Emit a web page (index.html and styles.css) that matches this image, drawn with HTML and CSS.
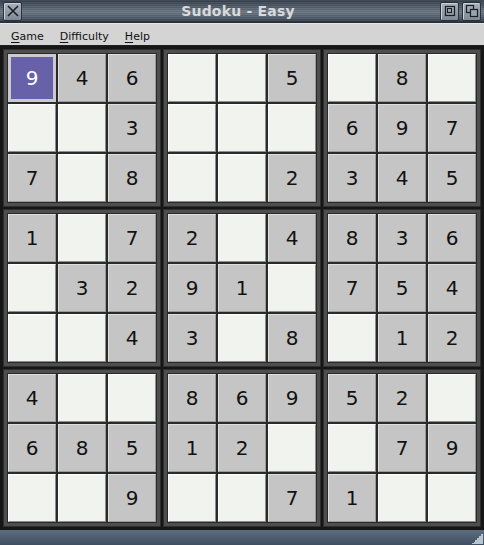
FILE: index.html
```html
<!DOCTYPE html>
<html>
<head>
<meta charset="utf-8">
<link rel="stylesheet" href="styles.css">
</head>
<body>
<div class="window">
  <div class="titlebar">
    <div class="tbtn close">
      <svg width="14" height="14" viewBox="0 0 14 14"><path d="M2 2 L12 12 M12 2 L2 12" stroke="#1a1f26" stroke-width="1.6" fill="none"/></svg>
    </div>
    <div class="title">Sudoku - Easy</div>
    <div class="tright">
      <div class="tbtn">
        <svg width="14" height="14" viewBox="0 0 14 14"><rect x="2.5" y="2.5" width="9" height="9" fill="none" stroke="#1a1f26" stroke-width="1.2"/><rect x="4.5" y="4.5" width="4" height="4" fill="none" stroke="#1a1f26" stroke-width="1"/></svg>
      </div>
      <div class="tbtn">
        <svg width="14" height="14" viewBox="0 0 14 14"><rect x="1.5" y="1.5" width="7" height="7" fill="none" stroke="#1a1f26" stroke-width="1.2"/><rect x="5.5" y="5.5" width="7" height="7" fill="#9aa4ae" stroke="#1a1f26" stroke-width="1.2"/></svg>
      </div>
    </div>
  </div>
  <div class="menubar">
    <span class="mi"><u>G</u>ame</span>
    <span class="mi"><u>D</u>ifficulty</span>
    <span class="mi"><u>H</u>elp</span>
  </div>
  <div class="board">
    <div class="block"><div class="grid">
      <div class="cell sel">9</div><div class="cell f">4</div><div class="cell f">6</div>
      <div class="cell"></div><div class="cell"></div><div class="cell f">3</div>
      <div class="cell f">7</div><div class="cell"></div><div class="cell f">8</div>
    </div></div>
    <div class="block"><div class="grid">
      <div class="cell"></div><div class="cell"></div><div class="cell f">5</div>
      <div class="cell"></div><div class="cell"></div><div class="cell"></div>
      <div class="cell"></div><div class="cell"></div><div class="cell f">2</div>
    </div></div>
    <div class="block"><div class="grid">
      <div class="cell"></div><div class="cell f">8</div><div class="cell"></div>
      <div class="cell f">6</div><div class="cell f">9</div><div class="cell f">7</div>
      <div class="cell f">3</div><div class="cell f">4</div><div class="cell f">5</div>
    </div></div>
    <div class="block"><div class="grid">
      <div class="cell f">1</div><div class="cell"></div><div class="cell f">7</div>
      <div class="cell"></div><div class="cell f">3</div><div class="cell f">2</div>
      <div class="cell"></div><div class="cell"></div><div class="cell f">4</div>
    </div></div>
    <div class="block"><div class="grid">
      <div class="cell f">2</div><div class="cell"></div><div class="cell f">4</div>
      <div class="cell f">9</div><div class="cell f">1</div><div class="cell"></div>
      <div class="cell f">3</div><div class="cell"></div><div class="cell f">8</div>
    </div></div>
    <div class="block"><div class="grid">
      <div class="cell f">8</div><div class="cell f">3</div><div class="cell f">6</div>
      <div class="cell f">7</div><div class="cell f">5</div><div class="cell f">4</div>
      <div class="cell"></div><div class="cell f">1</div><div class="cell f">2</div>
    </div></div>
    <div class="block"><div class="grid">
      <div class="cell f">4</div><div class="cell"></div><div class="cell"></div>
      <div class="cell f">6</div><div class="cell f">8</div><div class="cell f">5</div>
      <div class="cell"></div><div class="cell"></div><div class="cell f">9</div>
    </div></div>
    <div class="block"><div class="grid">
      <div class="cell f">8</div><div class="cell f">6</div><div class="cell f">9</div>
      <div class="cell f">1</div><div class="cell f">2</div><div class="cell"></div>
      <div class="cell"></div><div class="cell"></div><div class="cell f">7</div>
    </div></div>
    <div class="block"><div class="grid">
      <div class="cell f">5</div><div class="cell f">2</div><div class="cell"></div>
      <div class="cell"></div><div class="cell f">7</div><div class="cell f">9</div>
      <div class="cell f">1</div><div class="cell"></div><div class="cell"></div>
    </div></div>
  </div>
  <div class="statusstrip"><div class="grip"></div></div>
</div>
</body>
</html>
```
FILE: styles.css
```css
* { box-sizing: border-box; }
html, body { margin: 0; padding: 0; }
body {
  width: 484px;
  height: 545px;
  overflow: hidden;
  background: #4a5a6c;
  font-family: "DejaVu Sans", sans-serif;
}
.window {
  width: 484px;
  height: 545px;
  display: flex;
  flex-direction: column;
}
.titlebar {
  height: 23px;
  flex: none;
  display: flex;
  align-items: center;
  padding: 0 3px 0 3px;
  background:
    repeating-linear-gradient(to bottom, rgba(255,255,255,0.06) 0 1px, rgba(0,0,0,0.06) 1px 2px),
    linear-gradient(to bottom, #323d4a 0%, #56626f 35%, #6c7885 55%, #4a5664 85%, #2a333d 100%);
  border-bottom: 1px solid #27303a;
}
.title {
  flex: 1;
  text-align: center;
  color: #d8dadc;
  font-weight: bold;
  font-size: 14px;
  letter-spacing: 0.2px;
  padding-left: 14px;
}
.tright { display: flex; gap: 3px; }
.tbtn {
  width: 19px;
  height: 19px;
  border: 1px solid #2a323c;
  border-radius: 2px;
  background: linear-gradient(to bottom, #a9b2bb, #7e8994);
  box-shadow: inset 1px 1px 0 #c9d0d6;
  display: flex;
  align-items: center;
  justify-content: center;
}
.menubar {
  height: 23px;
  flex: none;
  background: #d4d4d4;
  border-top: 1px solid #e6e6e6;
  border-bottom: 1px solid #1e1e1e;
  display: flex;
  align-items: center;
  padding: 3px 0 0 11px;
  gap: 16px;
  font-size: 11px;
  color: #111;
}
.mi u { text-decoration: underline; text-underline-offset: 2px; }
.board {
  height: 484px;
  flex: none;
  background: #161616;
  padding: 3px;
  display: grid;
  grid-template-columns: repeat(3, 158px);
  grid-template-rows: repeat(3, 158px);
  gap: 2px;
}
.block {
  background: #4e4e4e;
  padding: 3px;
  border: 1px solid #2e2e2e;
}
.grid {
  background: #2a2a2a;
  padding: 1px;
  display: grid;
  grid-template-columns: repeat(3, 48px);
  grid-template-rows: repeat(3, 48px);
  gap: 2px;
  height: 150px;
  width: 150px;
}
.cell {
  background: #f1f3ef;
  border-top: 1px solid #ffffff;
  border-left: 1px solid #ffffff;
  border-bottom: 1px solid #8e8e8e;
  border-right: 1px solid #8e8e8e;
  display: flex;
  align-items: center;
  justify-content: center;
  font-size: 20px;
  color: #111;
}
.cell.f {
  background: #c5c5c5;
  border-top-color: #dedede;
  border-left-color: #dedede;
  border-bottom-color: #9a9a9a;
  border-right-color: #9a9a9a;
}
.cell.sel {
  background: #6661a9;
  color: #ffffff;
  border: 3px solid #c9c9cf;
}
.statusstrip {
  flex: 1;
  background: linear-gradient(to bottom, #5d6d80, #3f4e60);
  position: relative;
}
.grip {
  position: absolute;
  right: 1px;
  bottom: 1px;
  width: 11px;
  height: 11px;
  background: linear-gradient(135deg, transparent 50%, #b8c4d0 50%);
}
```
